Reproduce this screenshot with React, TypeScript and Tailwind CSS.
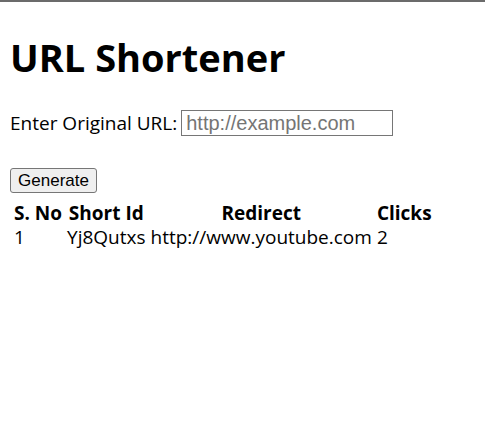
import { useState } from 'react';

interface Entry {
  shortId: string;
  redirect: string;
  clicks: number;
}

const entries: Entry[] = [{ shortId: 'Yj8Qutxs', redirect: 'http://www.youtube.com', clicks: 2 }];

export default function App() {
  const [url, setUrl] = useState('');

  return (
    <div className="min-h-screen bg-white text-black" style={{ fontFamily: '"Open Sans", "Noto Sans", sans-serif' }}>
      <div className="h-[2px] bg-[#6b6b6b]" />
      <div className="px-[10px] pt-[33px]">
        <h1 className="text-[38px] font-bold leading-[44px]">URL Shortener</h1>

        <form className="mt-[31px]" onSubmit={(e) => e.preventDefault()}>
          <div className="flex h-[26px] items-center gap-[4px]">
            <label htmlFor="url" className="text-[19px] leading-[26px]">
              Enter Original URL:
            </label>
            <input
              id="url"
              value={url}
              onChange={(e) => setUrl(e.target.value)}
              placeholder="http://example.com"
              className="h-[26px] w-[212px] border border-[#767676] px-[4px] text-[20px] leading-[22px] placeholder:text-[#757575] outline-none"
              style={{ fontFamily: '"Liberation Sans", Arial, sans-serif' }}
            />
          </div>
          <button
            type="submit"
            className="mt-[32px] block h-[25px] w-[87px] rounded-[3px] border border-[#767676] bg-[#efefef] text-[17px] leading-[21px]"
            style={{ fontFamily: '"Liberation Sans", Arial, sans-serif' }}
          >
            Generate
          </button>
        </form>

        <table className="mt-[8px] border-separate border-spacing-x-[3px] border-spacing-y-0 text-[19px] leading-[24px]">
          <thead>
            <tr>
              <th className="whitespace-nowrap px-px py-0">S. No</th>
              <th className="whitespace-nowrap px-px py-0">Short Id</th>
              <th className="whitespace-nowrap px-px py-0">Redirect</th>
              <th className="whitespace-nowrap px-px py-0">Clicks</th>
            </tr>
          </thead>
          <tbody>
            {entries.map((e, i) => (
              <tr key={e.shortId}>
                <td className="whitespace-nowrap px-px py-0">{i + 1}</td>
                <td className="whitespace-nowrap px-px py-0">{e.shortId}</td>
                <td className="whitespace-nowrap px-px py-0">{e.redirect}</td>
                <td className="whitespace-nowrap px-px py-0">{e.clicks}</td>
              </tr>
            ))}
          </tbody>
        </table>
      </div>
    </div>
  );
}
